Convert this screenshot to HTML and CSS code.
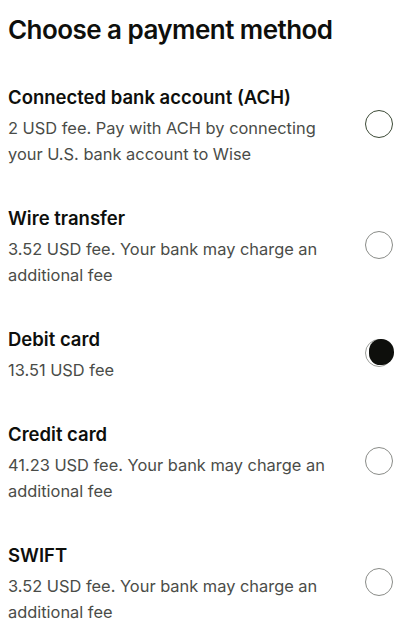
FILE: index.html
```html
<!DOCTYPE html>
<html lang="en">
<head>
<meta charset="utf-8">
<title>Choose a payment method</title>
<link rel="stylesheet" href="styles.css">
</head>
<body>
<main class="page">
  <h1 class="title">Choose a payment method</h1>
  <ul class="options">
    <li class="option">
      <div class="option-text">
        <h2 class="option-name">Connected bank account (ACH)</h2>
        <p class="option-desc">2 USD fee. Pay with ACH by connecting your U.S. bank account to Wise</p>
      </div>
      <span class="radio radio-focus"></span>
    </li>
    <li class="option">
      <div class="option-text">
        <h2 class="option-name">Wire transfer</h2>
        <p class="option-desc">3.52 USD fee. Your bank may charge an additional fee</p>
      </div>
      <span class="radio"></span>
    </li>
    <li class="option">
      <div class="option-text">
        <h2 class="option-name">Debit card</h2>
        <p class="option-desc">13.51 USD fee</p>
      </div>
      <span class="radio radio-checked"></span>
    </li>
    <li class="option">
      <div class="option-text">
        <h2 class="option-name">Credit card</h2>
        <p class="option-desc">41.23 USD fee. Your bank may charge an additional fee</p>
      </div>
      <span class="radio"></span>
    </li>
    <li class="option">
      <div class="option-text">
        <h2 class="option-name">SWIFT</h2>
        <p class="option-desc">3.52 USD fee. Your bank may charge an additional fee</p>
      </div>
      <span class="radio"></span>
    </li>
  </ul>
</main>
</body>
</html>
```

FILE: styles.css
```css
* { box-sizing: border-box; }
html, body { margin: 0; padding: 0; background: #ffffff; }
body {
  font-family: Inter, "Noto Sans", sans-serif;
  color: #0e0f0c;
}
.page {
  padding: 14px 11px 0 8px;
}
.title {
  margin: 0;
  font-size: 26px;
  font-weight: 600;
  line-height: 32px;
  letter-spacing: -0.55px;
}
.options {
  list-style: none;
  margin: 39px 0 0;
  padding: 0;
  display: flex;
  flex-direction: column;
  gap: 39px;
}
.option {
  display: flex;
  align-items: center;
  justify-content: space-between;
  gap: 16px;
}
.option-text { flex: 1; max-width: 336px; }
.option-name {
  margin: 0;
  font-size: 18.5px;
  font-weight: 600;
  line-height: 24px;
}
.option-desc {
  margin: 6px 0 0;
  font-size: 16.4px;
  line-height: 26px;
  color: #4a4c48;
}
.radio {
  flex: none;
  width: 28px;
  height: 28px;
  margin-bottom: 4px;
  border-radius: 50%;
  border: 1.5px solid #8a8c88;
  position: relative;
}
.radio-focus { border-color: #3c4a36; }
.radio-checked { border-color: #9a9c98; }
.radio-checked::after {
  content: "";
  position: absolute;
  left: 3px;
  top: -1px;
  width: 25px;
  height: 26px;
  border-radius: 46% 50% 48% 44%;
  background: #0e0f0c;
}
```
